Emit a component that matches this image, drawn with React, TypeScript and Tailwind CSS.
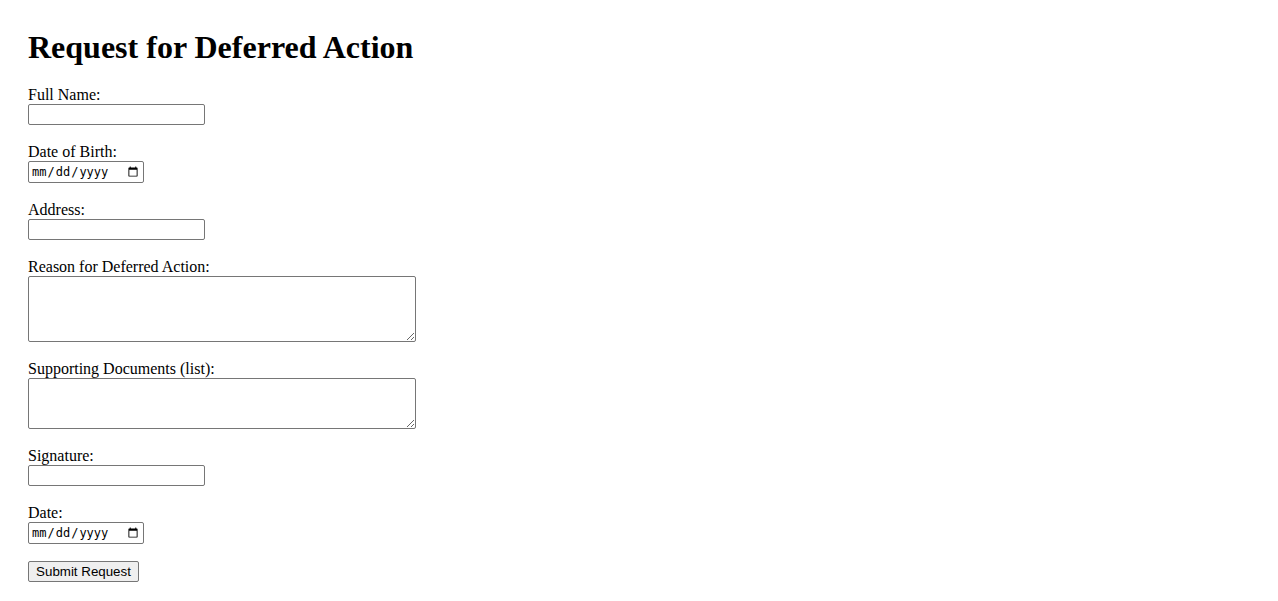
import React from "react";

const fields = [
  { id: "fullName", label: "Full Name:", kind: "text" },
  { id: "dob", label: "Date of Birth:", kind: "date" },
  { id: "address", label: "Address:", kind: "text" },
  { id: "reason", label: "Reason for Deferred Action:", kind: "area", h: "h-[66px]" },
  { id: "docs", label: "Supporting Documents (list):", kind: "area", h: "h-[51px]" },
  { id: "signature", label: "Signature:", kind: "text" },
  { id: "date", label: "Date:", kind: "date" },
];

export default function App() {
  return (
    <div className="min-h-screen bg-white px-[28px] pt-[29px] text-black font-['Liberation_Serif',serif]">
      <h1 className="mb-[19px] text-[32px] font-bold leading-[37px]">Request for Deferred Action</h1>
      <form onSubmit={(e) => e.preventDefault()}>
        {fields.map((f) => (
          <div key={f.id} className="mb-[17px]">
            <label htmlFor={f.id} className="block text-[16px] leading-[19px]">
              {f.label}
            </label>
            {f.kind === "text" && (
              <input
                id={f.id}
                type="text"
                className="block h-[21px] w-[177px] rounded-[2px] border border-[#767676] bg-white px-[2px] text-[13.33px]"
              />
            )}
            {f.kind === "date" && (
              <input
                id={f.id}
                type="date"
                className="block h-[22px] w-[116px] rounded-[2px] border border-[#767676] bg-white px-[2px] font-['DejaVu_Sans_Mono',monospace] text-[12px]"
              />
            )}
            {f.kind === "area" && (
              <textarea
                id={f.id}
                className={`block ${f.h} w-[388px] rounded-[2px] border border-[#767676] bg-white p-[2px] font-['Liberation_Mono',monospace] text-[13.33px]`}
              />
            )}
          </div>
        ))}
        <button
          type="submit"
          className="block h-[21px] w-[111px] rounded-[2px] border border-[#767676] bg-[#efefef] px-[6px] text-[13.33px] leading-none font-['Liberation_Sans',Arial,sans-serif]"
        >
          Submit Request
        </button>
      </form>
    </div>
  );
}
